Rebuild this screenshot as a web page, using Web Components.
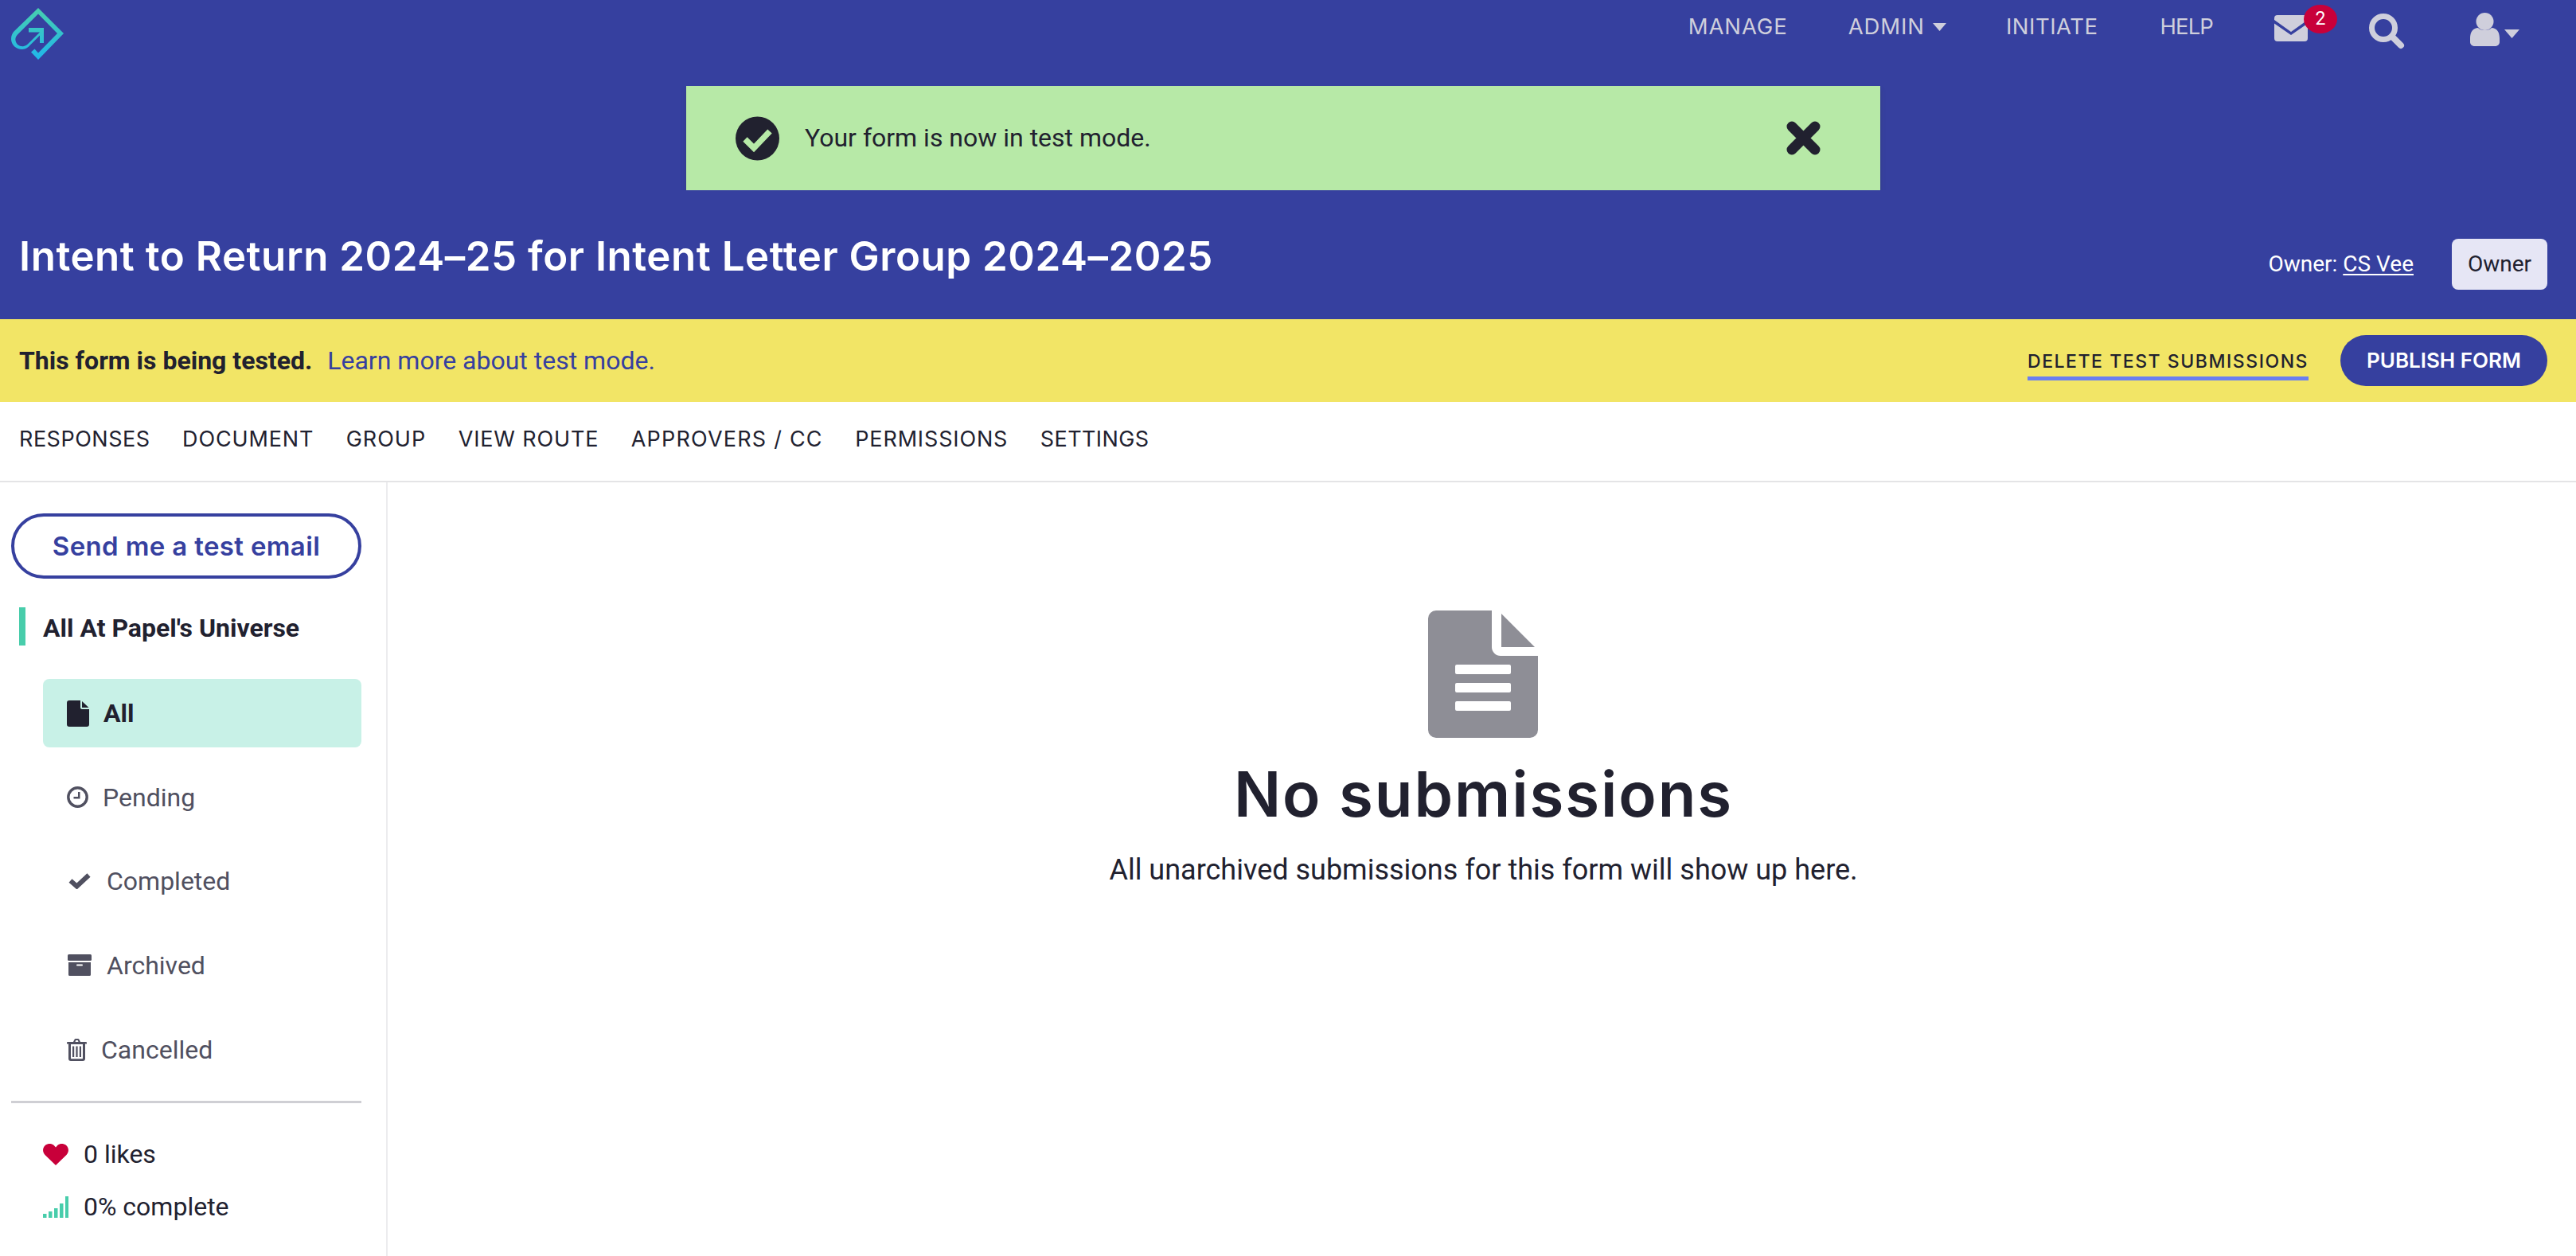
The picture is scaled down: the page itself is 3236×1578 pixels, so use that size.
<!DOCTYPE html>
<html lang="en">
<head>
<meta charset="utf-8">
<title>Intent to Return</title>
<style>
  html, body { margin: 0; padding: 0; height: 100%; background: #fff; }
  body { font-family: Roboto, "Liberation Sans", sans-serif; color: #21212f; overflow: hidden; }
</style>
</head>
<body>
<form-page>
  <top-bar slot="head"></top-bar>
  <flash-alert slot="head">Your form is now in test mode.</flash-alert>
  <title-row slot="head" owner="CS Vee">Intent to Return 2024–25 for Intent Letter Group 2024–2025</title-row>
  <test-bar slot="head"></test-bar>
  <tab-row slot="head"></tab-row>
  <side-bar slot="side">
    <side-item kind="file" active>All</side-item>
    <side-item kind="clock">Pending</side-item>
    <side-item kind="check">Completed</side-item>
    <side-item kind="archive">Archived</side-item>
    <side-item kind="trash">Cancelled</side-item>
  </side-bar>
  <empty-state heading="No submissions">All unarchived submissions for this form will show up here.</empty-state>
</form-page>

<script>
const SANS = 'Roboto, "Liberation Sans", sans-serif';
const DISPLAY = 'Inter, "Liberation Sans", sans-serif';

const ICONS = {
  file: '<svg width="28" height="33" viewBox="0 0 28 33"><path fill="#21212f" d="M3 0H17V9a2 2 0 0 0 2 2H28V30a3 3 0 0 1-3 3H3a3 3 0 0 1-3-3V3a3 3 0 0 1 3-3Z"/><path fill="#21212f" d="M19 1 27.500 9H19Z"/></svg>',
  clock: '<svg width="27" height="27" viewBox="0 0 27 27"><circle cx="13.500" cy="13.500" r="11.700" fill="none" stroke="#505060" stroke-width="3.400"/><path fill="#505060" d="M14 7h2.500v8.500H8.500V13H14Z"/></svg>',
  check: '<svg width="28" height="20" viewBox="0 0 28 20"><path fill="none" stroke="#505060" stroke-width="6" d="M2.500 9.500 10.500 16.500 25.500 2.500"/></svg>',
  archive: '<svg width="30" height="27" viewBox="0 0 30 27"><rect width="30" height="8" rx="1.500" fill="#505060"/><path fill="#505060" fill-rule="evenodd" d="M1 10H29V25.500a1.500 1.500 0 0 1-1.500 1.500H2.500A1.500 1.500 0 0 1 1 25.500ZM12 12.500a1 1 0 0 0 0 2H18a1 1 0 0 0 0-2Z"/></svg>',
  trash: '<svg width="25" height="28" viewBox="0 0 25 28"><path fill="#505060" fill-rule="evenodd" d="M8 4 9.500 1a2 2 0 0 1 1.500-1H14a2 2 0 0 1 1.500 1L17 4H24a1 1 0 0 1 1 1V6.500H23V25a3 3 0 0 1-3 3H5a3 3 0 0 1-3-3V6.500H0V5a1 1 0 0 1 1-1ZM10.500 4H14.500L13.700 2H11.300ZM5 7V24.500a.8.800 0 0 0 .8.800H19.200a.8.800 0 0 0 .8-.8V7ZM7 9.500H9.200V23H7ZM11.400 9.500H13.600V23H11.400ZM15.800 9.500H18V23H15.800Z"/></svg>'
};

class TopBar extends HTMLElement {
  constructor() {
    super();
    this.attachShadow({mode: 'open'}).innerHTML = `
    <style>
      :host { display: block; height: 108px; background: #36409f; color: #cfcfdc; position: relative; }
      .wrap { display: flex; align-items: flex-start; justify-content: space-between; height: 100%; }
      .logo { display: block; margin: 10px 0 0 14px; }
      nav { display: flex; align-items: flex-start; height: 100%; }
      a { font: 400 27.500px/1 ${DISPLAY}; letter-spacing: .9px; margin-top: 20px; display: flex; align-items: center; }
      .caret { margin-left: 10px; }
      .ico { display: block; }
      .mail { position: relative; margin: 19px 0 0 77px; width: 42px; height: 33px; }
      .badge { position: absolute; left: 37px; top: -13px; width: 42px; height: 36px; border-radius: 50%; background: #c8003a; color: #fff;
        font: 400 23px/36px ${SANS}; text-align: center; }
    </style>
    <div class="wrap">
      <svg class="logo" width="66" height="66" viewBox="0 0 66 66">
        <defs><linearGradient id="lg" x1="0" y1="0" x2="0" y2="1">
          <stop offset="0" stop-color="#48cfae"/><stop offset="1" stop-color="#1fb6ec"/>
        </linearGradient></defs>
        <path fill="url(#lg)" d="M34 0 66 32 34 65 25 55.500 29.500 51.500 34 56.500 58 32 34 7.500 8 33.500C5.500 36 5 39 5.500 41 6.500 46 11 49 16 48 18 47.700 19.500 46.700 21 45.300L36 30.500H22V25H41V44H36V34.500L24.500 46C22 49 18 52 14 52 6 52 0 46 0 39 0 35 1.500 31.500 4 29Z"/>
      </svg>
      <nav>
        <a style="margin-right:76px">MANAGE</a>
        <a style="margin-right:75px">ADMIN<svg class="caret" width="17" height="10" viewBox="0 0 17 10"><path fill="#cfcfdc" d="M0 0H17L8.500 10Z"/></svg></a>
        <a style="margin-right:78px;letter-spacing:.5px">INITIATE</a>
        <a style="letter-spacing:-.9px">HELP</a>
        <div class="mail">
          <svg class="ico" width="42" height="33" viewBox="0 0 42 33"><path fill="#cfcfdc" d="M4 0H38a4 4 0 0 1 4 4L42 6 21 21 0 6V4a4 4 0 0 1 4-4ZM0 10.500 21 25 42 10.500V29a4 4 0 0 1-4 4H4a4 4 0 0 1-4-4Z"/></svg>
          <span class="badge">2</span>
        </div>
        <svg class="ico" style="margin:16px 0 0 76px" width="46" height="46" viewBox="0 0 46 46"><circle cx="19" cy="19" r="14.500" fill="none" stroke="#cfcfdc" stroke-width="7"/><path stroke="#cfcfdc" stroke-width="8" stroke-linecap="round" fill="none" d="M30 30 41 41"/></svg>
        <svg class="ico" style="margin:16px 0 0 82px" width="37" height="42" viewBox="0 0 37 42"><circle cx="18.500" cy="11" r="11" fill="#cfcfdc"/><path fill="#cfcfdc" d="M10 19C13 23 24 23 27 19 33 19 37 24 37 32V37C37 40 34 42 31 42H6C3 42 0 40 0 37V32C0 24 4 19 10 19Z"/></svg>
        <svg class="ico" style="margin:37px 71px 0 6px" width="19" height="11" viewBox="0 0 19 11"><path fill="#cfcfdc" d="M0 0H19L9.500 11Z"/></svg>
      </nav>
    </div>`;
  }
}

class FlashAlert extends HTMLElement {
  constructor() {
    super();
    this.attachShadow({mode: 'open'}).innerHTML = `
    <style>
      :host { display: flex; justify-content: center; background: #36409f; padding-right: 0; }
      .box { width: 1500px; height: 131px; box-sizing: border-box; background: #b7e9a7; display: flex; align-items: center;
        padding: 0 75px 0 62px; color: #21212f; font: 400 32px/1 ${SANS}; box-shadow: 0 4px 6px rgba(60,60,60,.25); margin-left: -12px; }
      .msg { flex: 1; margin: -2px 0 0 32px; }
      svg { display: block; }
    </style>
    <div class="box">
      <svg width="55" height="56" viewBox="0 0 55 56"><circle cx="27.500" cy="28" r="27.500" fill="#21212f"/><path fill="none" stroke="#b7e9a7" stroke-width="7.500" d="M12 29 23 40 43 19"/></svg>
      <div class="msg"><slot></slot></div>
      <svg width="43" height="43" viewBox="0 0 43 43"><path fill="none" stroke="#21212f" stroke-width="13" stroke-linecap="round" d="M7 7 36 36M36 7 7 36"/></svg>
    </div>`;
  }
}

class TitleRow extends HTMLElement {
  constructor() {
    super();
    const owner = this.getAttribute('owner');
    this.attachShadow({mode: 'open'}).innerHTML = `
    <style>
      :host { display: flex; align-items: flex-start; justify-content: space-between; height: 162px; box-sizing: border-box; background: #36409f; color: #fff; padding: 0 36px 0 24px; }
      h1 { margin: 52px 0 0; font: 600 51px/1.2 ${DISPLAY}; letter-spacing: .53px; white-space: nowrap; }
      .right { display: flex; align-items: center; margin-top: 61px; font: 400 28px/1 ${SANS}; }
      .right a { color: #fff; text-decoration: underline; text-underline-offset: 3px; margin-left: 7px; }
      .tag { margin-left: 48px; width: 120px; height: 64px; border-radius: 8px; background: #e6e6f5; color: #21212f; display: flex; align-items: center; justify-content: center; }
    </style>
    <h1><slot></slot></h1>
    <div class="right"><span>Owner:</span><a>${owner}</a><span class="tag">Owner</span></div>`;
  }
}

class TestBar extends HTMLElement {
  constructor() {
    super();
    this.attachShadow({mode: 'open'}).innerHTML = `
    <style>
      :host { display: flex; align-items: center; justify-content: space-between; height: 104px; background: #f2e566; padding: 0 36px 0 24px; box-sizing: border-box; font: 400 32px/1 ${SANS}; }
      b { font-weight: 700; color: #21212f; }
      .learn { color: #36409f; margin-left: 19px; }
      .right { display: flex; align-items: center; }
      .del { font: 500 23px/1 ${DISPLAY}; letter-spacing: 1.550px; color: #21212f; border-bottom: 5px solid #6b7ff0; padding-bottom: 7px; margin-top: 14px; white-space: nowrap; }
      .pub { margin-left: 40px; width: 260px; height: 64px; border-radius: 32px; background: #36409f; color: #fff; display: flex; align-items: center; justify-content: center; font: 600 26px/1 ${DISPLAY}; }
    </style>
    <div><b>This form is being tested.</b><span class="learn">Learn more about test mode.</span></div>
    <div class="right"><span class="del">DELETE TEST SUBMISSIONS</span><span class="pub">PUBLISH FORM</span></div>`;
  }
}

class TabRow extends HTMLElement {
  constructor() {
    super();
    // per tab tracking, the fallback font is not as wide as the original one
    const tabs = [['RESPONSES', .5], ['DOCUMENT', .85], ['GROUP', 1], ['VIEW ROUTE', .85], ['APPROVERS / CC', 1.2], ['PERMISSIONS', .85], ['SETTINGS', .4]];
    this.attachShadow({mode: 'open'}).innerHTML = `
    <style>
      :host { display: flex; align-items: center; gap: 40.500px; height: 101px; box-sizing: border-box; padding: 0 24px 6px; background: #fff; border-bottom: 2px solid #e4e4e6; font: 400 27px/1 ${DISPLAY}; color: #21212f; }
    </style>
    ${tabs.map(([t, s]) => `<span style="letter-spacing:${s}px">${t}</span>`).join('')}`;
  }
}

class SideItem extends HTMLElement {
  constructor() {
    super();
    const kind = this.getAttribute('kind');
    this.attachShadow({mode: 'open'}).innerHTML = `
    <style>
      :host { display: flex; align-items: center; height: 86px; margin-bottom: 19.500px; box-sizing: border-box; padding-left: 30px; border-radius: 8px; color: #505060; font: 400 32px/1 ${SANS}; }
      :host([active]) { background: #c8f1e7; color: #21212f; font-weight: 700; }
      :host([kind="check"]) { padding-left: 32px; }
      :host([kind="archive"]) { padding-left: 31px; }
      .i { display: block; margin-right: 18px; }
      :host([kind="check"]) .i { margin-right: 20px; }
      :host([kind="archive"]) .i { margin-right: 19px; }
      :host([kind="trash"]) .i { margin-right: 18px; }
      :host([kind="trash"]) { padding-top: 2px; }
      .i svg { display: block; }
    </style>
    <span class="i">${ICONS[kind]}</span><slot></slot>`;
  }
}

class SideBar extends HTMLElement {
  constructor() {
    super();
    this.attachShadow({mode: 'open'}).innerHTML = `
    <style>
      :host { display: block; width: 487px; flex: none; box-sizing: border-box; border-right: 2px solid #ececee; padding: 39px 31px 0 14px; }
      .send { height: 82px; box-sizing: border-box; border: 4px solid #36409f; border-radius: 41px; color: #36409f; display: flex; align-items: center; justify-content: center; font: 600 33px/1 ${DISPLAY}; letter-spacing: .35px; }
      .org { margin: 36px 0 42px 10px; border-left: 8px solid #48cdab; height: 48px; box-sizing: border-box; padding: 3px 0 0 22px; display: flex; align-items: center; font: 700 32px/1 ${SANS}; color: #21212f; }
      .items { margin-left: 40px; }
      hr { border: 0; border-top: 3px solid #cfcfd4; margin: 0; position: relative; top: 2px; }
      .stat { display: flex; align-items: center; margin-left: 40px; font: 400 32px/1 ${SANS}; color: #21212f; height: 33px; }
      .stat svg { margin-right: 19px; display: block; }
    </style>
    <div class="send">Send me a test email</div>
    <div class="org">All At Papel's Universe</div>
    <div class="items"><slot></slot></div>
    <hr>
    <div class="stat" style="margin-top:50px"><svg width="32" height="27" viewBox="0 0 32 27"><path fill="#c8003a" d="M16 27 2.500 14C-1 10.500-.5 5 2.500 2.200 6-.8 11-.8 14 2.200L16 4.500 18 2.200C21-.8 26-.8 29.500 2.200 32.500 5 33 10.500 29.500 14Z"/></svg>0 likes</div>
    <div class="stat" style="margin-top:33px"><svg width="32" height="27" viewBox="0 0 32 27"><path fill="#48cdab" d="M0 22h4.500v5H0ZM7 19h4.500v8H7ZM14 15h4.500v12H14ZM21 9h4.500v18H21ZM28 0h4v27h-4Z"/></svg>0% complete</div>`;
  }
}

class EmptyState extends HTMLElement {
  constructor() {
    super();
    this.attachShadow({mode: 'open'}).innerHTML = `
    <style>
      :host { display: flex; flex-direction: column; align-items: center; flex: 1; padding: 161px 0 0 4px; color: #21212f; }
      svg { display: block; margin-left: -2px; }
      h2 { margin: 24px 0 0; font: 600 78px/1.2 ${DISPLAY}; letter-spacing: 1.900px; }
      p { margin: 27px 0 0; font: 400 36px/1.2 ${SANS}; }
    </style>
    <svg width="138" height="160" viewBox="0 0 138 160">
      <path fill="#8e8e96" fill-rule="evenodd" d="M10 0H80V46a11 11 0 0 0 11 11H138V150a10 10 0 0 1-10 10H10A10 10 0 0 1 0 150V10A10 10 0 0 1 10 0ZM36 68a2 2 0 0 0-2 2V78a2 2 0 0 0 2 2H102a2 2 0 0 0 2-2V70a2 2 0 0 0-2-2ZM36 91a2 2 0 0 0-2 2V101a2 2 0 0 0 2 2H102a2 2 0 0 0 2-2V93a2 2 0 0 0-2-2ZM36 114a2 2 0 0 0-2 2V124a2 2 0 0 0 2 2H102a2 2 0 0 0 2-2V116a2 2 0 0 0-2-2Z"/>
      <path fill="#8e8e96" d="M92 4 134 46H92Z"/>
    </svg>
    <h2>${this.getAttribute('heading')}</h2>
    <p><slot></slot></p>`;
  }
}

class FormPage extends HTMLElement {
  constructor() {
    super();
    this.attachShadow({mode: 'open'}).innerHTML = `
    <style>
      :host { display: flex; flex-direction: column; height: 100vh; overflow: hidden; }
      .main { display: flex; flex: 1; min-height: 0; }
    </style>
    <slot name="head"></slot>
    <div class="main"><slot name="side"></slot><slot></slot></div>`;
  }
}

customElements.define('top-bar', TopBar);
customElements.define('flash-alert', FlashAlert);
customElements.define('title-row', TitleRow);
customElements.define('test-bar', TestBar);
customElements.define('tab-row', TabRow);
customElements.define('side-item', SideItem);
customElements.define('side-bar', SideBar);
customElements.define('empty-state', EmptyState);
customElements.define('form-page', FormPage);
</script>
</body>
</html>
